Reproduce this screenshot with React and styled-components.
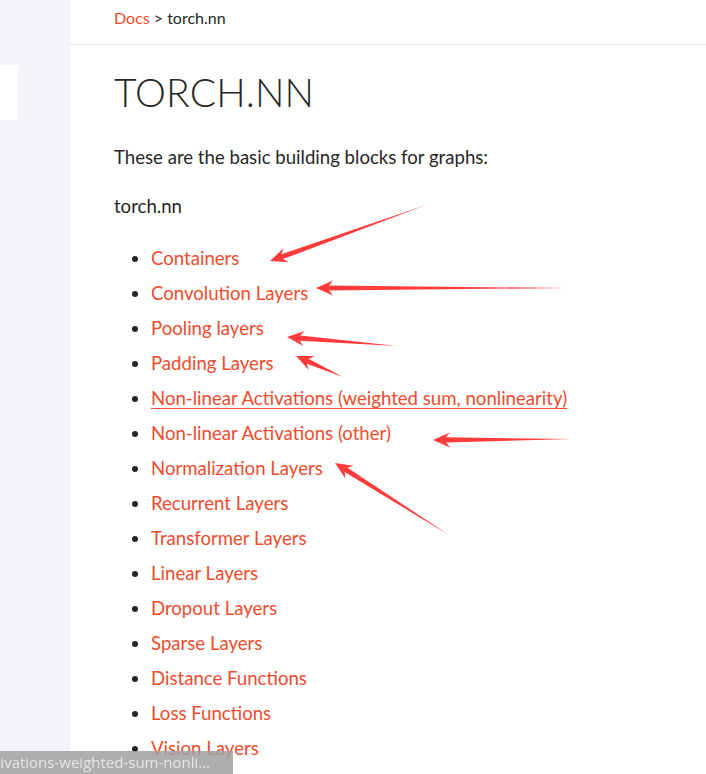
import React from 'react'
import styled, { createGlobalStyle } from 'styled-components'

const GlobalStyle = createGlobalStyle`
  html, body {
    margin: 0;
    padding: 0;
    overflow: hidden;
    background: #fff;
  }
  body {
    font-family: Lato, "Open Sans", sans-serif;
  }
`

const Page = styled.div`
  display: flex;
  height: 774px;
`

const Sidebar = styled.div`
  width: 70px;
  flex-shrink: 0;
  background: #f3f4f7;
  padding-top: 65px;
  box-sizing: border-box;
`

const SidebarTab = styled.div`
  width: 18px;
  height: 55px;
  background: #fff;
`

const Main = styled.div`
  flex: 1;
  position: relative;
  background: #fff;
`

const Breadcrumb = styled.div`
  height: 45px;
  box-sizing: border-box;
  border-bottom: 1px solid #e3e3e3;
  padding: 8px 0 0 44px;
  font-size: 16px;
  color: #262626;
  line-height: 20px;
`

const Crumb = styled.a`
  color: #ee4c2c;
  text-decoration: none;
`

const Article = styled.div`
  padding-left: 44px;
  color: #262626;
`

const Title = styled.h1`
  margin: 24px 0 0;
  font-size: 39px;
  font-weight: 300;
  letter-spacing: 0.1px;
  line-height: 46px;
`

const Paragraph = styled.p`
  margin: ${({ $top }) => $top}px 0 0;
  font-size: 18.6px;
  line-height: 24px;
`

const List = styled.ul`
  margin: 23px 0 0;
  padding-left: 37px;
  list-style: disc;
`

const Item = styled.li`
  height: 35px;
  font-size: 18.6px;
  line-height: 35px;
  color: #262626;
`

const Link = styled.a`
  color: #ee4c2c;
  text-decoration: ${({ $hover }) => ($hover ? 'underline' : 'none')};
  text-underline-offset: 3px;
`

const Arrows = styled.svg`
  position: absolute;
  left: -70px;
  top: 0;
  pointer-events: none;
`

const StatusBar = styled.div`
  position: fixed;
  left: 0;
  bottom: 0;
  width: 233px;
  height: 23px;
  background: rgba(160, 160, 160, 0.85);
  color: #e6e6e6;
  font-family: "Open Sans", sans-serif;
  font-size: 15px;
  line-height: 23px;
  white-space: nowrap;
  overflow: hidden;
  text-indent: -5px;
`

const items = [
  'Containers',
  'Convolution Layers',
  'Pooling layers',
  'Padding Layers',
  'Non-linear Activations (weighted sum, nonlinearity)',
  'Non-linear Activations (other)',
  'Normalization Layers',
  'Recurrent Layers',
  'Transformer Layers',
  'Linear Layers',
  'Dropout Layers',
  'Sparse Layers',
  'Distance Functions',
  'Loss Functions',
  'Vision Layers',
  'Shuffle Layers',
]

// tail -> tip, tapered body with a barbed head
const arrows = [
  [426, 205, 270, 261],
  [566, 288, 316, 288],
  [397, 346, 287, 337],
  [343, 377, 296, 356],
  [572, 439, 433, 440],
  [449, 535, 335, 463],
]

const arrowPoints = ([x1, y1, x2, y2]) => {
  const dx = x2 - x1
  const dy = y2 - y1
  const len = Math.hypot(dx, dy)
  const ux = dx / len
  const uy = dy / len
  const nx = -uy
  const ny = ux
  const head = 17
  const bx = x2 - ux * head
  const by = y2 - uy * head
  const neck = 2.6
  const wing = 7.5
  const back = 4
  const pts = [
    [x1, y1],
    [bx + ux * back + nx * neck, by + uy * back + ny * neck],
    [bx + nx * wing, by + ny * wing],
    [x2, y2],
    [bx - nx * wing, by - ny * wing],
    [bx + ux * back - nx * neck, by + uy * back - ny * neck],
  ]
  return pts.map(p => p.map(v => v.toFixed(1)).join(',')).join(' ')
}

const App = () => {
  return (
    <>
      <GlobalStyle />
      <Page>
        <Sidebar>
          <SidebarTab />
        </Sidebar>
        <Main>
          <Breadcrumb>
            <Crumb>Docs</Crumb> &gt; torch.nn
          </Breadcrumb>
          <Article>
            <Title>TORCH.NN</Title>
            <Paragraph $top={30}>These are the basic building blocks for graphs:</Paragraph>
            <Paragraph $top={25}>torch.nn</Paragraph>
            <List>
              {items.map((label, i) => (
                <Item key={label}>
                  <Link $hover={i === 4}>{label}</Link>
                </Item>
              ))}
            </List>
          </Article>
          <Arrows width="706" height="774">
            {arrows.map((a, i) => (
              <polygon key={i} points={arrowPoints(a)} fill="#ff3b3b" />
            ))}
          </Arrows>
        </Main>
      </Page>
      <StatusBar>tivations-weighted-sum-nonli...</StatusBar>
    </>
  )
}

export default App
